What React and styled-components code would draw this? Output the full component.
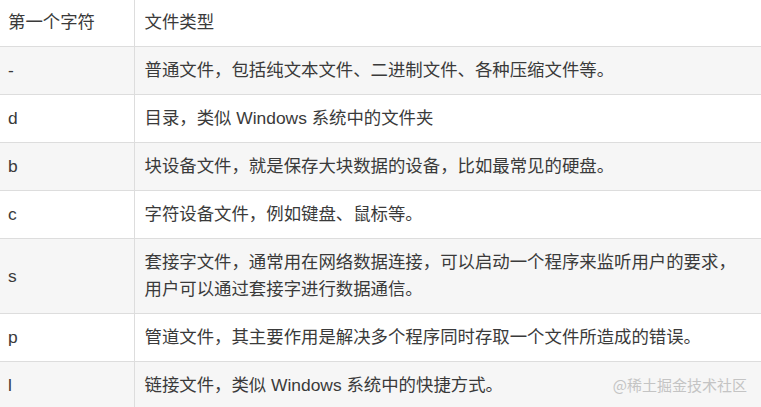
import styled, { createGlobalStyle } from "styled-components";

const rows = [
  { ch: "-", desc: "普通文件，包括纯文本文件、二进制文件、各种压缩文件等。" },
  { ch: "d", desc: "目录，类似 Windows 系统中的文件夹" },
  { ch: "b", desc: "块设备文件，就是保存大块数据的设备，比如最常见的硬盘。" },
  { ch: "c", desc: "字符设备文件，例如键盘、鼠标等。" },
  {
    ch: "s",
    desc: "套接字文件，通常用在网络数据连接，可以启动一个程序来监听用户的要求，用户可以通过套接字进行数据通信。",
  },
  { ch: "p", desc: "管道文件，其主要作用是解决多个程序同时存取一个文件所造成的错误。" },
  { ch: "l", desc: "链接文件，类似 Windows 系统中的快捷方式。" },
];

const App = () => {
  return (
    <Page>
      <GlobalStyle />
      <Table>
        <thead>
          <Row>
            <Cell as="th" $first $head>
              第一个字符
            </Cell>
            <Cell as="th" $head>
              文件类型
            </Cell>
          </Row>
        </thead>
        <tbody>
          {rows.map((r, i) => (
            <Row key={r.ch} $striped={i % 2 === 0}>
              <Cell $first>{r.ch}</Cell>
              <Cell>{r.desc}</Cell>
            </Row>
          ))}
        </tbody>
      </Table>
      <Watermark>@稀土掘金技术社区</Watermark>
    </Page>
  );
};

const GlobalStyle = createGlobalStyle`
  body {
    margin: 0;
    background: #fff;
  }
`;

const Page = styled.div`
  position: relative;
  width: 761px;
  height: 407px;
  overflow: hidden;
  font-family: "Liberation Sans", "Noto Sans CJK SC", sans-serif;
`;

const Table = styled.table`
  width: 761px;
  border-collapse: collapse;
  table-layout: fixed;
  color: #3a3a3a;
  font-size: 17.4px;
  line-height: 27px;
`;

const Row = styled.tr`
  background: ${(p) => (p.$striped ? "#f6f6f6" : "#fff")};
`;

const Cell = styled.td`
  box-sizing: border-box;
  width: ${(p) => (p.$first ? "134px" : "auto")};
  padding: ${(p) => (p.$head ? "9px" : "10px")} ${(p) => (p.$first ? "8px" : "20px")}
    10px ${(p) => (p.$first ? "8px" : "10px")};
  border-bottom: 1px solid #dddddd;
  border-right: ${(p) => (p.$first ? "1px solid #dddddd" : "none")};
  text-align: left;
  font-weight: normal;
  vertical-align: middle;
`;

const Watermark = styled.div`
  position: absolute;
  right: 14px;
  bottom: 12px;
  font-size: 15px;
  line-height: 20px;
  color: #c4c4c4;
  font-family: "Noto Sans CJK SC", sans-serif;
`;

export default App;
